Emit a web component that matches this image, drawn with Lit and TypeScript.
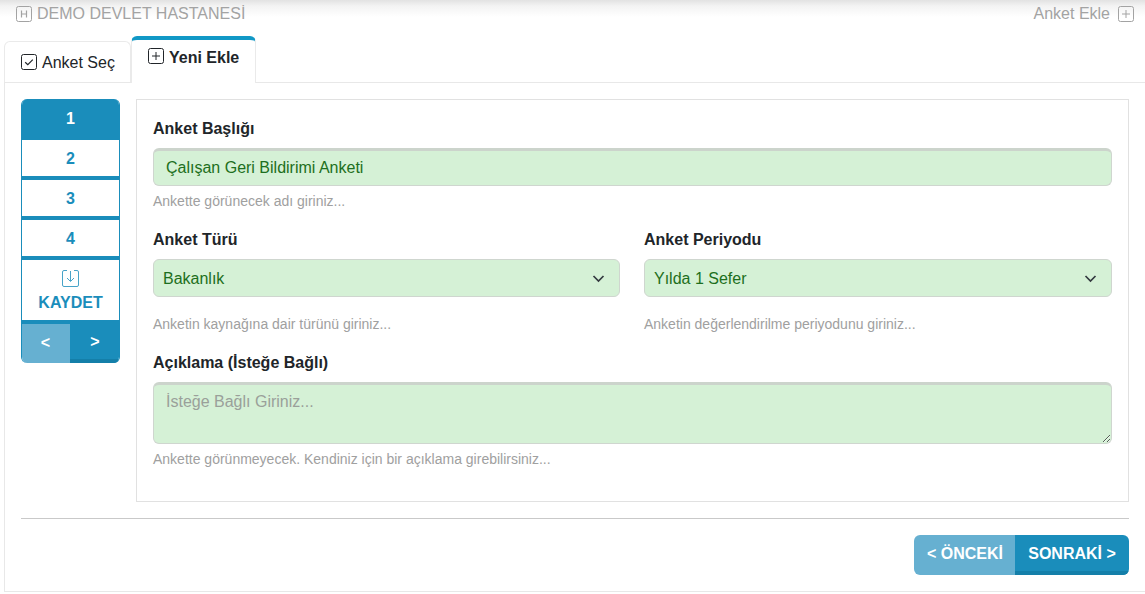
import { LitElement, html, css, svg } from "lit";
import { customElement } from "lit/decorators.js";

const boxIcon = (inner: unknown, cls: string) => html`<svg class=${cls} viewBox="0 0 16 16" fill="none" stroke="currentColor" stroke-width="1"><rect x=".5" y=".5" width="15" height="15" rx="2"></rect>${inner}</svg>`;
const plus = svg`<path d="M8 4v8M4 8h8"></path>`;
const check = svg`<path d="M4.2 8.2l2.6 2.5 5-5" stroke-width="1.2"></path>`;
const hLetter = svg`<path d="M5.5 4.5v7M10.5 4.5v7M5.5 8h5" stroke-width="1.2"></path>`;

@customElement("app-root")
export class AppRoot extends LitElement {
  static styles = css`
    :host { display: block; width: 1145px; height: 594px; overflow: hidden; background: #fff; font-family: "Liberation Sans", Arial, sans-serif; color: #212529; box-sizing: border-box; }
    * { box-sizing: border-box; }
    .top { height: 36px; display: flex; justify-content: space-between; padding: 4px 11px 0 16px; color: #a3a3a3; font-size: 16px; line-height: 20px; background: linear-gradient(#e2e2e2 0, #f3f3f3 6px, #fff 17px); }
    .top span { display: flex; align-items: center; gap: 5px; height: 20px; }
    .ic16 { width: 16px; height: 16px; flex: none; display: block; }
    .top span.r { gap: 8px; }
    .tabs { display: flex; align-items: flex-end; height: 46px; padding-left: 4px; position: relative; z-index: 1; }
    .tab { border: 1px solid #eaeaea; border-bottom: 0; border-radius: 6px 6px 0 0; display: flex; gap: 5px; font-size: 16px; }
    .tab.a { width: 127px; height: 41px; padding: 11px 0 0 16px; align-items: flex-start; color: #212529; line-height: 19px; }
    .tab.b { width: 125px; height: 47px; border-top: 4px solid #1198c6; padding: 8px 0 0 16px; font-weight: 700; background: #fff; margin-bottom: -1px; align-items: flex-start; line-height: 19px; }
    .tab.a .ic16 { margin-top: 1px; }
    .panel { margin-left: 4px; height: 510px; border: 1px solid #e8e8e8; padding: 16px; width: 1142px; }
    .row { display: flex; gap: 16px; align-items: flex-start; }
    .steps { width: 99px; height: 264px; border-radius: 6px; overflow: hidden; border: solid #1a8dbb; border-width: 0 1px; display: flex; flex-direction: column; flex: none; color: #1a8dbb; font-weight: 700; font-size: 16px; background: #fff; }
    .step { height: 40px; flex: none; display: flex; align-items: center; justify-content: center; border-bottom: 4px solid #1a8dbb; padding-top: 2px; }
    .step.on { height: 41px; background: #1a8dbb; color: #fff; border-bottom: 0; margin: 0 -1px; padding: 0 0 1px; }
    .save { height: 60px; flex: none; display: flex; flex-direction: column; align-items: center; padding-top: 10px; gap: 6px; }
    .save .t { line-height: 19px; }
    .ic-save { width: 17px; height: 17px; display: block; opacity: .8; }
    .pager { display: flex; height: 43px; margin: 0 -1px; flex: none; border-top: 4px solid #1a8dbb; color: #fff; }
    .pager div { display: flex; align-items: center; justify-content: center; }
    .pager .p { width: 49px; flex: none; background: #66b0d1; padding-bottom: 2px; }
    .pager .n { flex: 1; background: #1a8dbb; border-bottom: 4px solid #147fa9; }
    .form { width: 993px; height: 403px; flex: none; border: 1px solid #e1e1e1; padding: 16px 16px 0; }
    label { display: block; font-weight: 700; font-size: 16px; line-height: 24px; color: #212529; padding-top: 1px; margin-bottom: 7px; }
    .ctl { display: block; width: 100%; background: #d5f1d6; border: 1px solid #cfd6cf; border-radius: 6px; font: 16px/24px "Liberation Sans", Arial, sans-serif; color: #1d6f20; outline: 0; }
    input.ctl { height: 38px; border-top: 3px solid #ccd4cc; padding: 0 12px; }
    textarea.ctl { height: 62px; border-top: 3px solid #ccd4cc; padding: 5px 12px; }
    textarea.ctl::placeholder { color: #9aa09a; opacity: 1; }
    .selwrap { position: relative; }
    select.ctl { height: 38px; appearance: none; -webkit-appearance: none; padding: 2px 9px 0; }
    .chev { position: absolute; right: 15px; top: 13px; width: 14px; height: 12px; color: #343a40; pointer-events: none; }
    .hint { font-size: 14px; line-height: 20px; color: #a0a0a0; }
    .h1 { margin-top: 5px; height: 36px; }
    .cols { display: grid; grid-template-columns: 467px 468px; gap: 24px; }
    .gap2 { margin-top: 17px; height: 36px; }
    .h3 { margin-top: 5px; }
    .foot { margin-top: 16px; border-top: 1px solid #c9c9c9; padding-top: 16px; display: flex; justify-content: flex-end; width: 1108px; }
    .btns { display: flex; height: 40px; border-radius: 6px; overflow: hidden; color: #fff; font-weight: 700; font-size: 16px; }
    .btns div { display: flex; align-items: center; justify-content: center; }
    .btns .p { width: 101px; background: #66b0d1; padding: 0 0 2px 1px; }
    .btns .n { width: 114px; background: #1a8dbb; border-bottom: 4px solid #147fa9; padding-top: 2px; }
  `;

  render() {
    return html`
      <div class="top">
        <span>${boxIcon(hLetter, "ic16")} DEMO DEVLET HASTANESİ</span>
        <span class="r">Anket Ekle ${boxIcon(plus, "ic16")}</span>
      </div>
      <div class="tabs">
        <div class="tab a">${boxIcon(check, "ic16")}<span>Anket Seç</span></div>
        <div class="tab b">${boxIcon(plus, "ic16")}<span>Yeni Ekle</span></div>
      </div>
      <div class="panel">
        <div class="row">
          <div class="steps">
            <div class="step on">1</div>
            <div class="step">2</div>
            <div class="step">3</div>
            <div class="step">4</div>
            <div class="save">
              <svg class="ic-save" viewBox="0 0 17 17" fill="none" stroke="currentColor" stroke-width="1"><path d="M5 .5H2A1.5 1.5 0 0 0 .5 2v13A1.5 1.5 0 0 0 2 16.5h13a1.5 1.5 0 0 0 1.5-1.5V2A1.5 1.5 0 0 0 15 .5h-3"></path><path d="M8.5 1v10M5 8l3.5 3.5L12 8"></path></svg>
              <span class="t">KAYDET</span>
            </div>
            <div class="pager"><div class="p">&lt;</div><div class="n">&gt;</div></div>
          </div>
          <div class="form">
            <label>Anket Başlığı</label>
            <input class="ctl" .value=${"Çalışan Geri Bildirimi Anketi"} />
            <div class="hint h1">Ankette görünecek adı giriniz...</div>
            <div class="cols">
              <div>
                <label>Anket Türü</label>
                <div class="selwrap"><select class="ctl"><option>Bakanlık</option></select>${this.chev()}</div>
                <div class="hint gap2">Anketin kaynağına dair türünü giriniz...</div>
              </div>
              <div>
                <label>Anket Periyodu</label>
                <div class="selwrap"><select class="ctl"><option>Yılda 1 Sefer</option></select>${this.chev()}</div>
                <div class="hint gap2">Anketin değerlendirilme periyodunu giriniz...</div>
              </div>
            </div>
            <label>Açıklama (İsteğe Bağlı)</label>
            <textarea class="ctl" placeholder="İsteğe Bağlı Giriniz..."></textarea>
            <div class="hint h3">Ankette görünmeyecek. Kendiniz için bir açıklama girebilirsiniz...</div>
          </div>
        </div>
        <div class="foot">
          <div class="btns"><div class="p">&lt; ÖNCEKİ</div><div class="n">SONRAKİ &gt;</div></div>
        </div>
      </div>
    `;
  }

  chev() {
    return html`<svg class="chev" viewBox="0 0 14 12" fill="none" stroke="currentColor" stroke-width="1.7"><path d="M2.5 4l5 5 5-5"></path></svg>`;
  }
}
